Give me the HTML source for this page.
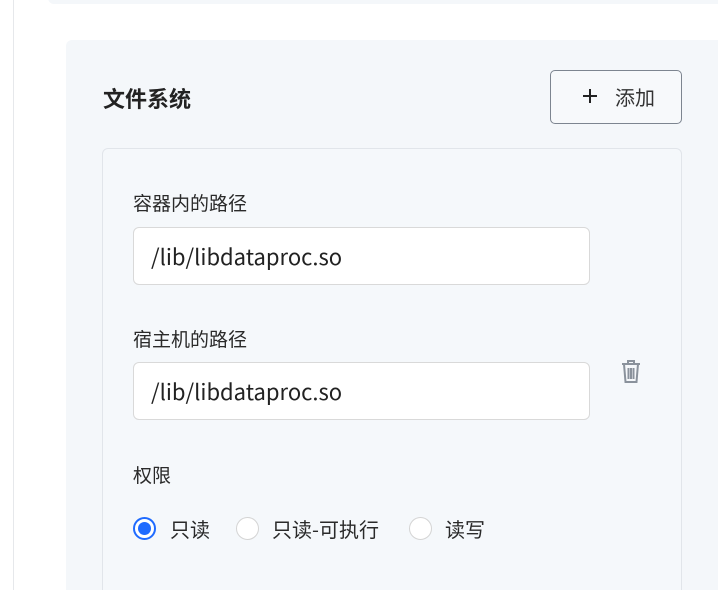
<!DOCTYPE html><html><head><meta charset="utf-8"><style>
html,body{margin:0;width:718px;height:590px;overflow:hidden}
body{background:#fff;font-family:"Noto Sans CJK SC","Liberation Sans",sans-serif;color:#222;position:relative}
.a{position:absolute}
.lbl{font-size:19px;color:#2a2a2a;line-height:26px}
.inp{position:absolute;left:133px;width:457px;height:58px;background:#fff;border:1px solid #d9d9d9;border-radius:6px;box-sizing:border-box;font-size:22px;line-height:56px;padding-left:17px;color:#222}
.rad{position:absolute;top:517px;width:23px;height:23px;border-radius:50%;border:1px solid #d4d4d4;background:#fff;box-sizing:border-box}
.rl{position:absolute;top:515px;font-size:20px;color:#2a2a2a;line-height:28px}
</style></head><body>
<div class="a" style="left:13px;top:0;width:1px;height:590px;background:#e6e8eb"></div>
<div class="a" style="left:48px;top:-10px;width:680px;height:14px;background:#f4f7fa;border-radius:6px"></div>
<div class="a" style="left:66px;top:40px;width:660px;height:570px;background:#f4f7fa;border-radius:6px"></div>
<div class="a" style="left:103px;top:82px;font-size:22px;font-weight:bold;color:#222;line-height:32px">文件系统</div>
<div class="a" style="left:550px;top:70px;width:132px;height:54px;box-sizing:border-box;border:1px solid #7d8590;border-radius:5px;background:#f7f9fb"></div>
<svg class="a" style="left:582px;top:88px" width="16" height="16" viewBox="0 0 16 16"><path d="M8 1v14M1 8h14" stroke="#222" stroke-width="2"/></svg>
<div class="a" style="left:615px;top:83px;font-size:20px;color:#333;line-height:28px">添加</div>
<div class="a" style="left:102px;top:148px;width:580px;height:470px;box-sizing:border-box;border:1px solid #e1e5ea;border-radius:6px;background:#f5f8fb"></div>
<div class="a lbl" style="left:133px;top:190px">容器内的路径</div>
<div class="inp" style="top:227px">/lib/libdataproc.so</div>
<div class="a lbl" style="left:133px;top:326px">宿主机的路径</div>
<div class="inp" style="top:362px">/lib/libdataproc.so</div>
<svg class="a" style="left:620px;top:359px" width="22" height="26" viewBox="0 0 22 26" fill="none" stroke="#8a929c" stroke-width="2"><path d="M2 5h18M8 5V2h6v3M4 5l1.5 18h11L18 5M8.5 9v11M11 9v11M13.5 9v11"/></svg>
<div class="a lbl" style="left:133px;top:462px">权限</div>
<div class="rad" style="left:133px;border:2px solid #1f6bff"><div style="position:absolute;left:3px;top:3px;width:13px;height:13px;border-radius:50%;background:#1f6bff"></div></div>
<div class="rl" style="left:170px">只读</div>
<div class="rad" style="left:236px"></div>
<div class="rl" style="left:272px">只读-可执行</div>
<div class="rad" style="left:409px"></div>
<div class="rl" style="left:445px">读写</div>
</body></html>
